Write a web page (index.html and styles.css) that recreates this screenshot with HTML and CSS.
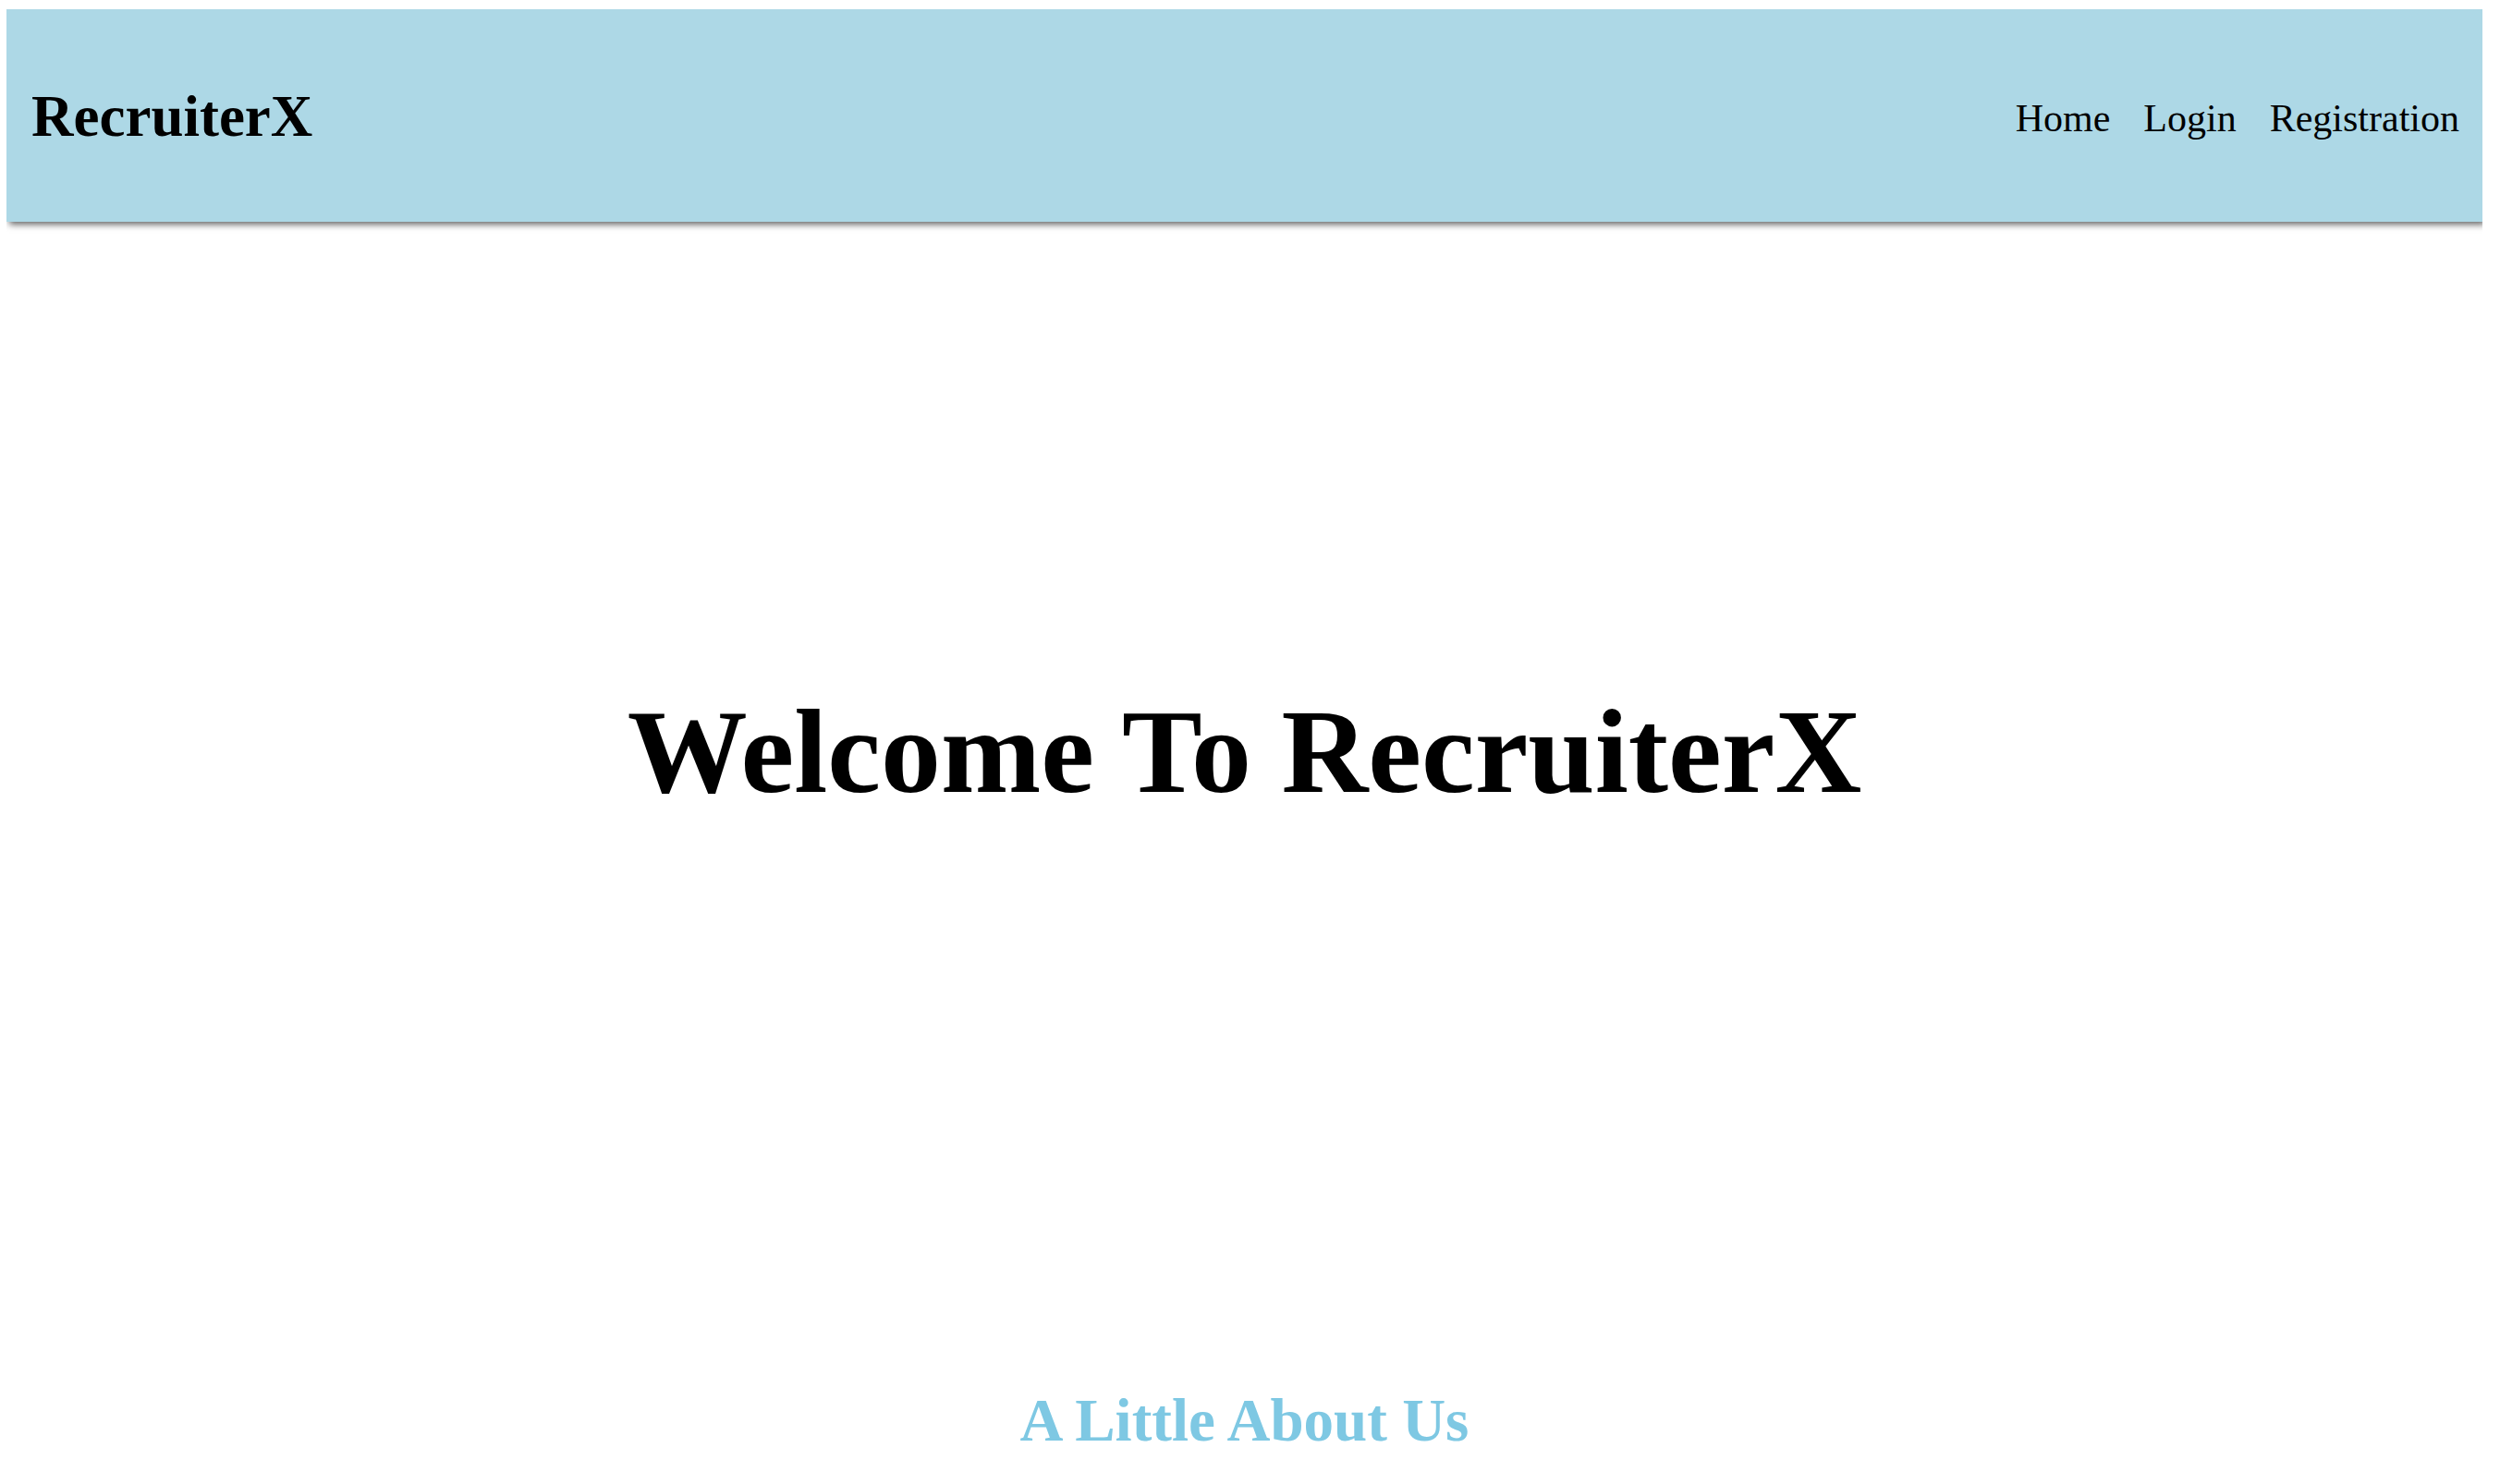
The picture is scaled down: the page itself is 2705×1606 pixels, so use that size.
FILE: index.html
```html
<!DOCTYPE html>
<html lang="en">
<head>
    <meta charset="UTF-8">
    <meta name="viewport" content="width=device-width, initial-scale=1.0">
    <title>RecruiterX</title>
    <link rel="stylesheet" href="styles.css">
</head>
<body>
    <header class="topbar">
        <div class="logo">RecruiterX</div>
        <nav class="nav">
            <a href="#">Home</a>
            <a href="#">Login</a>
            <a href="#">Registration</a>
        </nav>
    </header>

    <section class="hero">
        <h1>Welcome To RecruiterX</h1>
    </section>

    <section class="about">
        <h2>A Little About Us</h2>
    </section>
</body>
</html>
```

FILE: styles.css
```css
body {
    margin: 10px 19px 0 7px;
    font-family: "Liberation Serif", "Times New Roman", serif;
    background-color: #fff;
    color: #000;
}

.topbar {
    height: 230px;
    box-sizing: border-box;
    padding: 0 25px 0 27px;
    display: flex;
    align-items: center;
    justify-content: space-between;
    background-color: lightblue;
    box-shadow: 3px 3px 7px rgba(0, 0, 0, 0.6);
}

.logo {
    font-size: 63px;
    font-weight: bold;
    margin-top: 2px;
}

.nav {
    display: flex;
    gap: 36px;
    margin-top: 6px;
}

.nav a {
    font-size: 42px;
    color: #000;
    text-decoration: none;
}

.hero {
    height: 1146px;
    display: flex;
    align-items: center;
    justify-content: center;
}

.hero h1 {
    margin: 0;
    font-size: 130px;
    font-weight: bold;
}

.about {
    padding-top: 114px;
    text-align: center;
}

.about h2 {
    margin: 0;
    font-size: 65px;
    font-weight: bold;
    color: #7ec8e3;
}
```
